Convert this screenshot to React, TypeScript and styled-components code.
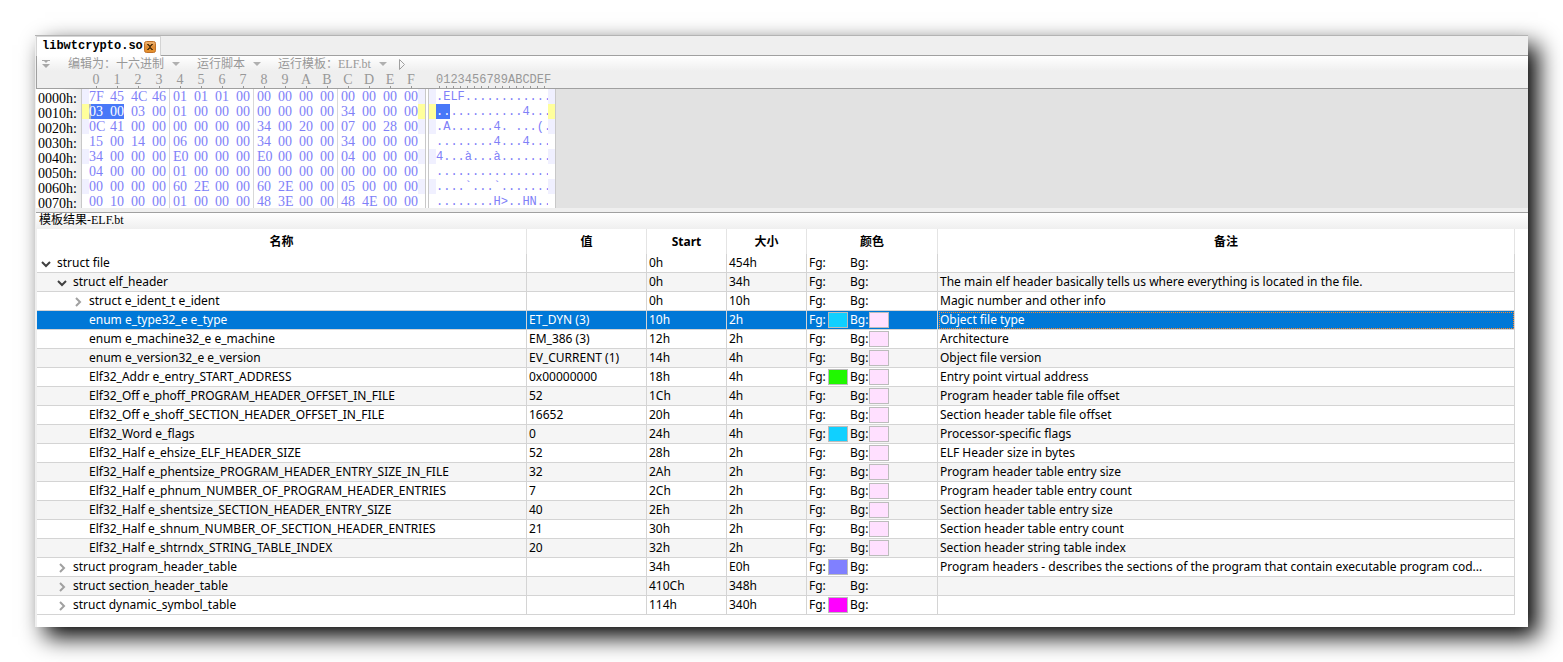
import React from "react";
import styled, { createGlobalStyle, css } from "styled-components";

const CJK = '"Noto Sans CJK SC"';
const serif = `"Liberation Serif", ${CJK}, serif`;
const mono = `"Liberation Mono", ${CJK}, monospace`;
const sans = `"Noto Sans", ${CJK}, sans-serif`;

const GlobalStyle = createGlobalStyle`
  *, *::before, *::after { box-sizing: border-box; }
  body { margin: 0; background: #fff; }
`;

const Page = styled.div`
  padding: 35px;
  overflow: hidden;
`;

const Window = styled.main`
  display: flex;
  flex-direction: column;
  padding-left: 1px;
  border-top: 1px solid #b3b3b3;
  background: #efefef;
  box-shadow: 10px 10px 22px #000;
`;

const TabBar = styled.header`
  display: flex;
  height: 20px;
  border-bottom: 1px solid #a0a0a0;
`;

const Tab = styled.div`
  display: flex;
  align-items: center;
  gap: 1px;
  height: 20px;
  padding: 0 4px 0 5px;
  border: 1px solid #d4d4d4;
  border-width: 1px 1px 0;
  background: #fff;
  font: bold 12px/19px ${mono};
  color: #000;
`;

const CloseButton = styled.button`
  display: flex;
  width: 12px;
  height: 12px;
  padding: 0;
  border: 0;
  background: none;
`;

const Toolbar = styled.div`
  display: flex;
  align-items: center;
  height: 15px;
  padding: 1px 0 0 5px;
  border-left: 1px solid #a0a0a0;
  background: linear-gradient(#fff, #efefef);
  font: 12px/14px ${serif};
  color: #989898;
`;

const ToolButton = styled.button<{ $gap?: number }>`
  display: flex;
  align-items: center;
  gap: 8px;
  height: 14px;
  margin-right: ${(p) => p.$gap ?? 0}px;
  padding: 0;
  border: 0;
  background: none;
  font: inherit;
  color: inherit;
  white-space: nowrap;
`;

const Ruler = styled.div`
  display: flex;
  height: 18px;
  padding-left: 52px;
  border-left: 1px solid #a0a0a0;
  border-bottom: 1px solid #a0a0a0;
  font: 14px/17px ${serif};
  color: #989898;
`;

const RulerCell = styled.span`
  width: 21px;
  padding-right: 7px;
  background: linear-gradient(#989898, #989898) 7px 100% / 1px 2px no-repeat;
  text-align: center;
`;

const RulerAscii = styled.span`
  width: 112px;
  margin-left: 11px;
  background: linear-gradient(90deg, transparent 3px, #989898 3px 4px, transparent 4px) 0 100% / 7px 2px repeat-x;
  font: 12px/18px ${mono};
`;

const HexView = styled.section`
  display: flex;
  height: 119px;
  overflow: hidden;
  background: #e2e2e2;
  line-height: 15px;
  color: #8080f8;
`;

const Addresses = styled.div`
  display: flex;
  flex-direction: column;
  width: 46px;
  padding: 2px 0 0 2px;
  border-right: 1px solid #c8c8c8;
  background: linear-gradient(90deg, #fff 50%, #ececec);
  font: 14px/15px ${serif};
  color: #000;
`;

const Pane = styled.div<{ $left?: boolean }>`
  display: flex;
  flex-direction: column;
  border-right: 1px solid #c8c8c8;
  ${(p) => p.$left && css`border-left: 1px solid #c8c8c8;`}
  background: #fff;
`;

const PaneGap = styled.div`
  width: 2px;
  background: #fff;
`;

type Tone = "plain" | "stripe" | "current";
const toneColor = { plain: "#fff", stripe: "#f0f0ff", current: "#ffff9c" };

const Gutter = styled.span<{ $tone: Tone }>`
  width: 7px;
  flex: none;
  background: ${(p) => toneColor[p.$tone]};
`;

const HexLine = styled.div`
  display: flex;
  flex: none;
  height: 15px;
`;

const ByteGroup = styled.div<{ $last: boolean }>`
  display: flex;
  width: ${(p) => (p.$last ? 77 : 81)}px;
  margin-right: ${(p) => (p.$last ? 0 : 3)}px;
  border-right: ${(p) => (p.$last ? 0 : 1)}px solid #d8d8d8;
  font: 14px/15px ${serif};
`;

const Byte = styled.span<{ $selected?: boolean; $first?: boolean }>`
  flex: none;
  width: ${(p) => (p.$selected && !p.$first ? 14 : 21)}px;
  ${(p) =>
    p.$selected &&
    css`
      margin-right: ${p.$first ? 0 : 7}px;
      background: #4878f8;
      color: #fff;
    `}
  ${(p) => p.$first && css`box-shadow: inset 2px 0 #b8b8b0;`}
`;

const AsciiText = styled.span`
  width: 112px;
  font: 12px/16px ${mono};
  white-space: pre;
`;

const AsciiSelection = styled.span`
  display: inline-block;
  height: 15px;
  background: #4878f8;
  color: #fff;
`;

const Splitter = styled.div`
  height: 5px;
  border-bottom: 1px solid #a0a0a0;
`;

const PanelTitle = styled.h2`
  height: 16px;
  margin: 0;
  padding-left: 3px;
  background: linear-gradient(#fff, #efefef);
  font: 12px/15px ${serif};
  color: #000;
`;

const TablePanel = styled.section`
  margin-left: 1px;
  padding: 0 13px 12px 0;
  background: #fff;
`;

const Table = styled.table`
  width: 100%;
  table-layout: fixed;
  border-collapse: separate;
  border-spacing: 0;
  font: 12px/18px ${sans};
  color: #000;
`;

const HeadCell = styled.th<{ $width?: number }>`
  width: ${(p) => (p.$width ? `${p.$width}px` : "auto")};
  height: 25px;
  padding: 0;
  border-right: 1px solid #e4e4e4;
  font-weight: bold;
`;

const Row = styled.tr<{ $selected?: boolean }>`
  background: #fff;
  &:nth-child(even) {
    background: #f5f5f5;
  }
  ${(p) =>
    p.$selected &&
    css`
      &&:nth-child(even) {
        background: #0078d7;
      }
      color: #fff;
    `}
`;

const Cell = styled.td<{ $focused?: boolean }>`
  height: 19px;
  padding: 0 2px;
  border-right: 1px solid #d4d4d4;
  border-bottom: 1px solid #d4d4d4;
  overflow: hidden;
  text-overflow: ellipsis;
  white-space: nowrap;
  ${(p) => p.$focused && css`outline: 1px dotted #ff8728; outline-offset: -2px;`}
`;

const NameLabel = styled.div<{ $depth: number }>`
  display: flex;
  align-items: center;
  gap: 5px;
  height: 18px;
  padding-left: ${(p) => 2 + p.$depth * 16}px;
`;

const Twisty = styled.svg`
  flex: none;
  width: 11px;
  height: 11px;
  fill: none;
  stroke-width: 2;
`;

const Colors = styled.div`
  display: flex;
  align-items: center;
  height: 18px;
`;

const ColorLabel = styled.span`
  width: 19px;
`;

const Swatch = styled.span<{ $color?: string; $gap?: number }>`
  width: 20px;
  height: 16px;
  margin-right: ${(p) => p.$gap ?? 0}px;
  border: 1px solid ${(p) => (p.$color ? "#bcbcbc" : "transparent")};
  background: ${(p) => p.$color ?? "transparent"};
`;

const hexRows: { bytes: string; ascii: string }[] = [
  { bytes: "7F 45 4C 46 01 01 01 00 00 00 00 00 00 00 00 00", ascii: ".ELF............" },
  { bytes: "03 00 03 00 01 00 00 00 00 00 00 00 34 00 00 00", ascii: "............4..." },
  { bytes: "0C 41 00 00 00 00 00 00 34 00 20 00 07 00 28 00", ascii: ".A......4. ...(." },
  { bytes: "15 00 14 00 06 00 00 00 34 00 00 00 34 00 00 00", ascii: "........4...4..." },
  { bytes: "34 00 00 00 E0 00 00 00 E0 00 00 00 04 00 00 00", ascii: "4...à...à......." },
  { bytes: "04 00 00 00 01 00 00 00 00 00 00 00 00 00 00 00", ascii: "................" },
  { bytes: "00 00 00 00 60 2E 00 00 60 2E 00 00 05 00 00 00", ascii: "....`...`......." },
  { bytes: "00 10 00 00 01 00 00 00 48 3E 00 00 48 4E 00 00", ascii: "........H>..HN.." },
];

const SELECTED_LINE = 1;
const toneOf = (line: number): Tone =>
  line === SELECTED_LINE ? "current" : line % 2 === 0 ? "stripe" : "plain";

type Field = {
  name: string;
  depth: number;
  state?: "open" | "closed";
  value?: string;
  start: string;
  size: string;
  fg?: string;
  bg?: string;
  note?: string;
  selected?: boolean;
};

const PINK = "#ffe0ff";
const CYAN = "#10d0ff";

const fields: Field[] = [
  { name: "struct file", depth: 0, state: "open", start: "0h", size: "454h" },
  { name: "struct elf_header", depth: 1, state: "open", start: "0h", size: "34h", note: "The main elf header basically tells us where everything is located in the file." },
  { name: "struct e_ident_t e_ident", depth: 2, state: "closed", start: "0h", size: "10h", note: "Magic number and other info" },
  { name: "enum e_type32_e e_type", depth: 2, value: "ET_DYN (3)", start: "10h", size: "2h", fg: CYAN, bg: PINK, note: "Object file type", selected: true },
  { name: "enum e_machine32_e e_machine", depth: 2, value: "EM_386 (3)", start: "12h", size: "2h", bg: PINK, note: "Architecture" },
  { name: "enum e_version32_e e_version", depth: 2, value: "EV_CURRENT (1)", start: "14h", size: "4h", bg: PINK, note: "Object file version" },
  { name: "Elf32_Addr e_entry_START_ADDRESS", depth: 2, value: "0x00000000", start: "18h", size: "4h", fg: "#20f800", bg: PINK, note: "Entry point virtual address" },
  { name: "Elf32_Off e_phoff_PROGRAM_HEADER_OFFSET_IN_FILE", depth: 2, value: "52", start: "1Ch", size: "4h", bg: PINK, note: "Program header table file offset" },
  { name: "Elf32_Off e_shoff_SECTION_HEADER_OFFSET_IN_FILE", depth: 2, value: "16652", start: "20h", size: "4h", bg: PINK, note: "Section header table file offset" },
  { name: "Elf32_Word e_flags", depth: 2, value: "0", start: "24h", size: "4h", fg: CYAN, bg: PINK, note: "Processor-specific flags" },
  { name: "Elf32_Half e_ehsize_ELF_HEADER_SIZE", depth: 2, value: "52", start: "28h", size: "2h", bg: PINK, note: "ELF Header size in bytes" },
  { name: "Elf32_Half e_phentsize_PROGRAM_HEADER_ENTRY_SIZE_IN_FILE", depth: 2, value: "32", start: "2Ah", size: "2h", bg: PINK, note: "Program header table entry size" },
  { name: "Elf32_Half e_phnum_NUMBER_OF_PROGRAM_HEADER_ENTRIES", depth: 2, value: "7", start: "2Ch", size: "2h", bg: PINK, note: "Program header table entry count" },
  { name: "Elf32_Half e_shentsize_SECTION_HEADER_ENTRY_SIZE", depth: 2, value: "40", start: "2Eh", size: "2h", bg: PINK, note: "Section header table entry size" },
  { name: "Elf32_Half e_shnum_NUMBER_OF_SECTION_HEADER_ENTRIES", depth: 2, value: "21", start: "30h", size: "2h", bg: PINK, note: "Section header table entry count" },
  { name: "Elf32_Half e_shtrndx_STRING_TABLE_INDEX", depth: 2, value: "20", start: "32h", size: "2h", bg: PINK, note: "Section header string table index" },
  { name: "struct program_header_table", depth: 1, state: "closed", start: "34h", size: "E0h", fg: "#8080ff", note: "Program headers - describes the sections of the program that contain executable program cod..." },
  { name: "struct section_header_table", depth: 1, state: "closed", start: "410Ch", size: "348h" },
  { name: "struct dynamic_symbol_table", depth: 1, state: "closed", start: "114h", size: "340h", fg: "#ff00ff" },
];

const columns: { label: string; width?: number }[] = [
  { label: "名称", width: 490 },
  { label: "值", width: 120 },
  { label: "Start", width: 80 },
  { label: "大小", width: 80 },
  { label: "颜色", width: 131 },
  { label: "备注" },
];

const DropArrow = () => (
  <svg width="8" height="4" viewBox="0 0 8 4" fill="#b0b0b0" aria-hidden="true">
    <path d="M0 0h8L4 4z" />
  </svg>
);

const CollapseIcon = () => (
  <svg width="8" height="8" viewBox="0 0 8 8" fill="#a8a8a8" aria-hidden="true">
    <path d="M0 0h8v1H6L4 3 2 1H0zM0 4h8L4 8z" />
  </svg>
);

const RunIcon = () => (
  <svg width="7" height="11" viewBox="0 0 7 11" fill="none" stroke="#a0a0a0" aria-hidden="true">
    <path d="M.5 .5v10l5-5z" />
  </svg>
);

const CloseIcon = () => (
  <svg width="12" height="12" viewBox="0 0 12 12" aria-hidden="true">
    <defs>
      <linearGradient id="closeFill" x1="0" y1="0" x2="0" y2="1">
        <stop offset="0" stopColor="#f0b878" />
        <stop offset="0.5" stopColor="#dd8a35" />
        <stop offset="1" stopColor="#e8942c" />
      </linearGradient>
    </defs>
    <rect x=".5" y=".5" width="11" height="11" rx="2" fill="url(#closeFill)" stroke="#c07028" />
    <path d="M3 3h2v1h2V3h2v1H8v1H7v2h1v1h1v1H7V8H5v1H3V8h1V7h1V5H4V4H3z" fill="#5a3810" />
  </svg>
);

const TwistyIcon = ({ state }: { state?: "open" | "closed" }) => (
  <Twisty viewBox="0 0 11 11" stroke={state === "open" ? "#404040" : "#a0a0a0"} aria-hidden="true">
    {state === "open" && <path d="M1 4l4 4 4-4" />}
    {state === "closed" && <path d="M3 2l4 4-4 4" />}
  </Twisty>
);

const HexBytes = ({ line, bytes }: { line: number; bytes: string[] }) => (
  <HexLine>
    <Gutter $tone={toneOf(line)} />
    {[0, 4, 8, 12].map((start) => (
      <ByteGroup key={start} $last={start === 12}>
        {bytes.slice(start, start + 4).map((byte, i) => {
          const index = start + i;
          const selected = line === SELECTED_LINE && index < 2;
          return (
            <Byte key={index} $selected={selected} $first={selected && index === 0}>
              {byte}
            </Byte>
          );
        })}
      </ByteGroup>
    ))}
    <Gutter $tone={toneOf(line)} />
  </HexLine>
);

export default function App() {
  return (
    <>
      <GlobalStyle />
      <Page>
        <Window>
          <TabBar>
            <Tab>
              libwtcrypto.so
              <CloseButton aria-label="关闭">
                <CloseIcon />
              </CloseButton>
            </Tab>
          </TabBar>
          <Toolbar>
            <ToolButton $gap={18} aria-label="折叠">
              <CollapseIcon />
            </ToolButton>
            <ToolButton $gap={17}>
              编辑为：十六进制
              <DropArrow />
            </ToolButton>
            <ToolButton $gap={17}>
              运行脚本
              <DropArrow />
            </ToolButton>
            <ToolButton $gap={12}>
              运行模板：ELF.bt
              <DropArrow />
            </ToolButton>
            <ToolButton aria-label="运行">
              <RunIcon />
            </ToolButton>
          </Toolbar>
          <Ruler>
            {[..."0123456789ABCDEF"].map((digit) => (
              <RulerCell key={digit}>{digit}</RulerCell>
            ))}
            <RulerAscii>0123456789ABCDEF</RulerAscii>
          </Ruler>
          <HexView>
            <Addresses>
              {hexRows.map((_, i) => (
                <span key={i}>{`00${i}0h:`}</span>
              ))}
            </Addresses>
            <Pane>
              {hexRows.map((row, i) => (
                <HexBytes key={i} line={i} bytes={row.bytes.split(" ")} />
              ))}
            </Pane>
            <PaneGap />
            <Pane $left>
              {hexRows.map((row, i) => (
                <HexLine key={i}>
                  <Gutter $tone={toneOf(i)} />
                  <AsciiText>
                    {i === SELECTED_LINE ? (
                      <>
                        <AsciiSelection>{row.ascii.slice(0, 2)}</AsciiSelection>
                        {row.ascii.slice(2)}
                      </>
                    ) : (
                      row.ascii
                    )}
                  </AsciiText>
                  <Gutter $tone={toneOf(i)} />
                </HexLine>
              ))}
            </Pane>
          </HexView>
          <Splitter />
          <PanelTitle>模板结果-ELF.bt</PanelTitle>
          <TablePanel>
            <Table>
              <thead>
                <tr>
                  {columns.map((column) => (
                    <HeadCell key={column.label} $width={column.width} scope="col">
                      {column.label}
                    </HeadCell>
                  ))}
                </tr>
              </thead>
              <tbody>
                {fields.map((field) => (
                  <Row key={field.name} $selected={field.selected}>
                    <Cell>
                      <NameLabel $depth={field.depth}>
                        <TwistyIcon state={field.state} />
                        {field.name}
                      </NameLabel>
                    </Cell>
                    <Cell>{field.value}</Cell>
                    <Cell>{field.start}</Cell>
                    <Cell>{field.size}</Cell>
                    <Cell>
                      <Colors>
                        <ColorLabel>Fg:</ColorLabel>
                        <Swatch $color={field.fg} $gap={2} />
                        <ColorLabel>Bg:</ColorLabel>
                        <Swatch $color={field.bg} />
                      </Colors>
                    </Cell>
                    <Cell $focused={field.selected}>{field.note}</Cell>
                  </Row>
                ))}
              </tbody>
            </Table>
          </TablePanel>
        </Window>
      </Page>
    </>
  );
}
